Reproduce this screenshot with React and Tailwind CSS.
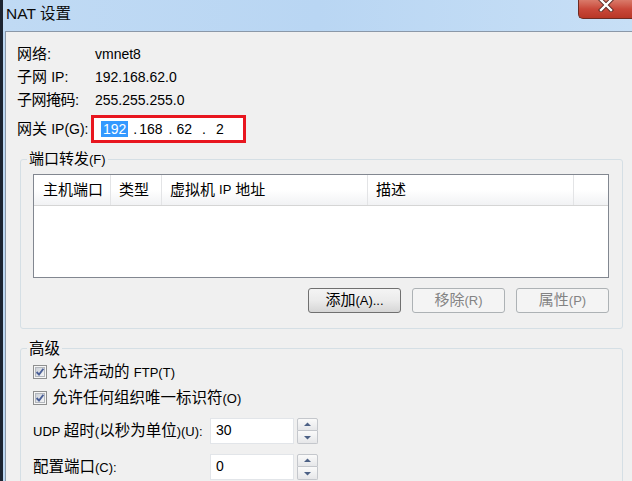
import React from "react";

function L({ children, className = "" }) {
  return <span className={"text-[13px] " + className}>{children}</span>;
}

function CheckBox() {
  return (
    <svg width="14" height="14" viewBox="0 0 14 14" className="shrink-0">
      <defs>
        <linearGradient id="cbg" x1="0" y1="0" x2="1" y2="1">
          <stop offset="0" stopColor="#c9ced6" />
          <stop offset="1" stopColor="#f7f7f7" />
        </linearGradient>
      </defs>
      <rect x="0.5" y="0.5" width="13" height="13" fill="#f6f6f6" stroke="#8e8f8f" />
      <rect x="2.5" y="2.5" width="9" height="9" fill="url(#cbg)" stroke="#b3b7bd" />
      <path d="M3.6 7 L6 9.6 L10.4 3.8" fill="none" stroke="#4a5f97" strokeWidth="1.9" />
    </svg>
  );
}

function SpinBox({ value }) {
  return (
    <div className="flex">
      <div className="w-[84px] h-[26px] bg-white border border-[#e2e5e9] text-[14px] leading-[18px] pl-[5px] pt-[2px]">
        {value}
      </div>
      <div className="flex flex-col ml-[3px]">
        <div className="w-[21px] h-[13px] border border-[#c4c7cc] rounded-t-[2px] bg-gradient-to-b from-[#fafafa] to-[#e6e7e9] flex items-center justify-center">
          <svg width="7" height="5" viewBox="0 0 7 5">
            <path d="M0 4 L3.5 0.5 L7 4Z" fill="#4d6185" />
          </svg>
        </div>
        <div className="w-[21px] h-[13px] border border-t-0 border-[#c4c7cc] rounded-b-[2px] bg-gradient-to-b from-[#fafafa] to-[#e6e7e9] flex items-center justify-center">
          <svg width="7" height="5" viewBox="0 0 7 5">
            <path d="M0 1 L3.5 4.5 L7 1Z" fill="#4d6185" />
          </svg>
        </div>
      </div>
    </div>
  );
}

export default function App() {
  return (
    <div className="w-[632px] h-[481px] overflow-hidden flex bg-[#bcd7f2] text-black font-['Liberation_Sans','Noto_Sans_CJK_SC',sans-serif]">
      <div className="w-[3px] shrink-0 bg-[#1c2431]" />
      <div className="flex-1 flex flex-col min-w-0">
        {/* Title bar */}
        <div className="h-[31px] shrink-0 flex items-start justify-between bg-gradient-to-r from-[#c0daf4] via-[#b9d6f3] to-[#c7dff6]">
          <div className="pl-[3px] pt-[4px] text-[15.5px] leading-[20px] text-[#0b0b0b]">
            NAT 设置
          </div>
          <div className="w-[54px] h-[19px] rounded-bl-[5px] border border-t-0 border-r-0 border-[#6e2b22] bg-gradient-to-b from-[#d97a6a] via-[#c9483a] to-[#b83726] flex items-start justify-center">
            <svg width="16" height="13" viewBox="0 0 16 13" className="mt-[-1px]">
              <path d="M3 1 L13 11 M13 1 L3 11" stroke="#5a2a24" strokeWidth="4.2" strokeLinecap="square" />
              <path d="M3 1 L13 11 M13 1 L3 11" stroke="#ffffff" strokeWidth="2.4" strokeLinecap="square" />
            </svg>
          </div>
        </div>

        {/* Body */}
        <div className="flex-1 ml-[2px] border-l border-t border-[#8b98a8] bg-[#f0f0f0] flex flex-col">
          {/* info */}
          <div className="pt-[11px] pl-[11px] flex flex-col">
            <div className="h-[23px] flex items-center">
              <div className="w-[78px] text-[15px]">网络:</div>
              <div className="text-[14px]">vmnet8</div>
            </div>
            <div className="h-[23px] flex items-center">
              <div className="w-[78px] text-[15px]">
                子网 <span className="text-[14px]">IP:</span>
              </div>
              <div className="text-[14px]">192.168.62.0</div>
            </div>
            <div className="h-[23px] flex items-center">
              <div className="w-[78px] text-[15px] tracking-[-0.5px]">子网掩码:</div>
              <div className="text-[14px]">255.255.255.0</div>
            </div>
            <div className="h-[28px] mt-[3px] flex items-center">
              <div className="w-[74px] text-[15px]">
                网关 <span className="text-[14px]">IP(G):</span>
              </div>
              <div className="w-[155px] h-[28px] border-[3px] border-[#e8161f] bg-white flex items-center pl-[7px] text-[14px]">
                <span className="bg-[#3399ff] text-white px-[2px] h-[16px] leading-[16px]">192</span>
                <span className="ml-[5px]">.</span>
                <span className="ml-[2px]">168</span>
                <span className="ml-[6px]">.</span>
                <span className="ml-[4px]">62</span>
                <span className="ml-[10px]">.</span>
                <span className="ml-[10px]">2</span>
              </div>
            </div>
          </div>

          {/* 端口转发 */}
          <fieldset className="mt-[7px] ml-[14px] w-[603px] border border-[#d5dfe5] rounded-[3px] shrink-0">
            <legend className="ml-[6px] px-[2px] text-[15px] leading-[17px]">
              端口转发<L>(F)</L>
            </legend>
            <div className="mt-[6px] ml-[12px] w-[576px] h-[104px] border border-[#828790] bg-white flex flex-col">
              <div className="h-[31px] flex border-b border-[#d5d5d5] bg-gradient-to-b from-[#ffffff] via-[#ffffff] to-[#f1f2f4] text-[15px]">
                <div className="w-[77px] border-r border-[#e3e4e6] flex items-center pl-[9px]">主机端口</div>
                <div className="w-[51px] border-r border-[#e3e4e6] flex items-center pl-[8px]">类型</div>
                <div className="w-[206px] border-r border-[#e3e4e6] flex items-center pl-[8px]">
                  虚拟机 <span className="text-[13px] mx-[4px]">IP</span> 地址
                </div>
                <div className="w-[206px] border-r border-[#e3e4e6] flex items-center pl-[8px]">描述</div>
                <div className="flex-1" />
              </div>
              <div className="flex-1" />
            </div>
            <div className="mt-[10px] ml-[12px] w-[576px] flex justify-end gap-[11px] pb-[15px]">
              <div className="w-[93px] h-[25px] rounded-[3px] border border-[#707070] bg-gradient-to-b from-[#f4f4f4] via-[#ebebeb] to-[#d6d6d6] flex items-center justify-center text-[15px]">
                添加<L>(A)...</L>
              </div>
              <div className="w-[93px] h-[25px] rounded-[3px] border border-[#adb2b5] bg-[#f4f4f4] flex items-center justify-center text-[15px] text-[#838383]">
                移除<L>(R)</L>
              </div>
              <div className="w-[93px] h-[25px] rounded-[3px] border border-[#adb2b5] bg-[#f4f4f4] flex items-center justify-center text-[15px] text-[#838383]">
                属性<L>(P)</L>
              </div>
            </div>
          </fieldset>

          {/* 高级 */}
          <fieldset className="mt-[11px] ml-[14px] w-[603px] border border-[#d5dfe5] rounded-[3px] shrink-0 pb-[20px]">
            <legend className="ml-[6px] px-[2px] text-[15.5px] leading-[17px]">高级</legend>
            <div className="mt-[2px] ml-[12px] flex flex-col text-[15.5px]">
              <div className="h-[26px] flex items-center gap-[5px]">
                <CheckBox />
                <span>
                  允许活动的 <L>FTP(T)</L>
                </span>
              </div>
              <div className="h-[26px] flex items-center gap-[5px]">
                <CheckBox />
                <span>
                  允许任何组织唯一标识符<L>(O)</L>
                </span>
              </div>
              <div className="mt-[7px] flex items-center">
                <div className="w-[177px]">
                  <L>UDP </L>超时<L>(</L>以秒为单位<L>)(U):</L>
                </div>
                <SpinBox value="30" />
              </div>
              <div className="mt-[10px] flex items-center">
                <div className="w-[177px]">
                  配置端口<L>(C):</L>
                </div>
                <SpinBox value="0" />
              </div>
            </div>
          </fieldset>
        </div>
      </div>
    </div>
  );
}
